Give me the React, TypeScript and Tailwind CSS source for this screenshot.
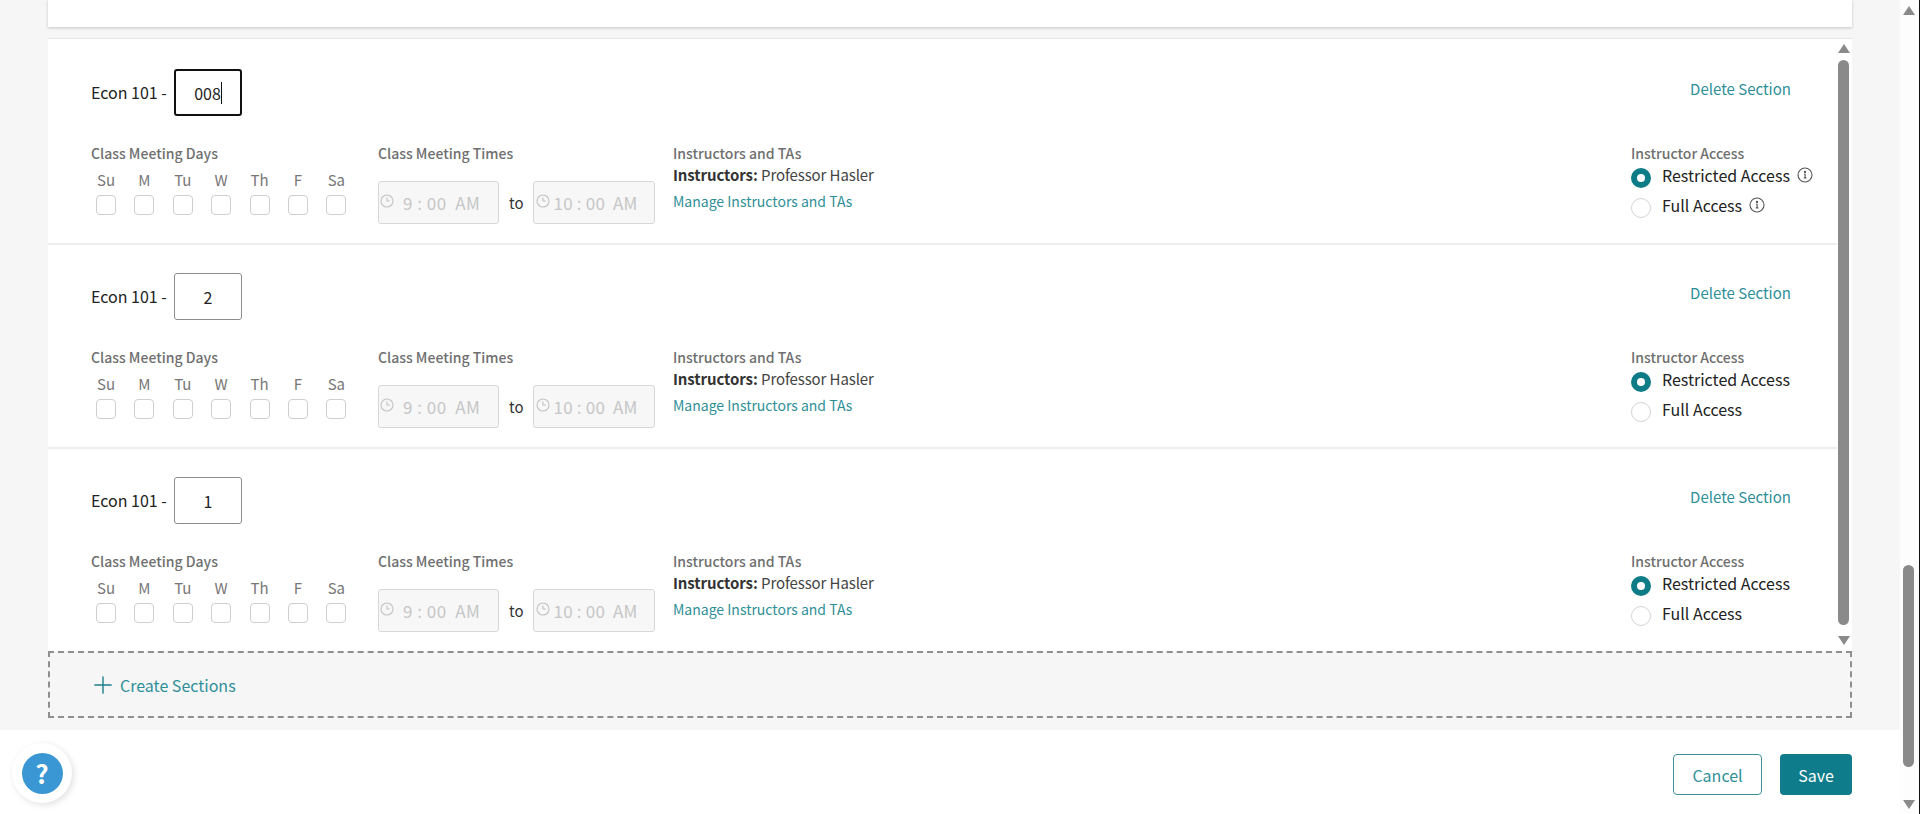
import { Plus } from "lucide-react";

const DAYS = ["Su", "M", "Tu", "W", "Th", "F", "Sa"];

function Clock() {
  return (
    <svg width="14" height="14" viewBox="0 0 14 14" fill="none" stroke="#c4c4c4" strokeWidth="1.1" className="mt-[-4px] shrink-0">
      <circle cx="7" cy="7" r="6" />
      <path d="M7 3.5V7h3" />
    </svg>
  );
}

function Info() {
  return (
    <svg width="16" height="16" viewBox="0 0 16 16" fill="none" stroke="#555" strokeWidth="1.1" className="shrink-0">
      <circle cx="8" cy="8" r="7" />
      <path d="M7 7.2h1.1v3.6M6.8 10.9h2.6" />
      <circle cx="8" cy="5" r="0.6" fill="#555" />
    </svg>
  );
}

function TimeBox({ time, narrow }: { time: string; narrow?: boolean }) {
  return (
    <div
      className={
        narrow
          ? "flex h-[43px] w-[122px] items-center rounded-[3px] border border-[#d8d8d8] bg-[#f7f7f7] pl-[2px] text-[#c6c6c6]"
          : "flex h-[43px] w-[121px] items-center rounded-[3px] border border-[#d8d8d8] bg-[#f7f7f7] pl-[1px] text-[#c6c6c6]"
      }
    >
      <Clock />
      <span className={narrow ? "ml-[4px] text-[17px] tracking-[0.2px] whitespace-pre" : "ml-[9px] text-[17px] tracking-[0.5px] whitespace-pre"}>
        {time}
      </span>
    </div>
  );
}

function Arrow({ down, className }: { down?: boolean; className?: string }) {
  return (
    <svg width="12" height="9" viewBox="0 0 12 9" className={className}>
      <path d={down ? "M0 0h12L6 9z" : "M6 0l6 9H0z"} fill="#8a8a8a" />
    </svg>
  );
}

function Section({ value, focused, info, last }: { value: string; focused?: boolean; info?: boolean; last?: boolean }) {
  return (
    <div className={last ? "h-[200px] pl-[43px] pr-[20px]" : "h-[204px] border-b-2 border-[#eeeeee] pl-[43px] pr-[20px]"}>
      <div className="flex h-[102px] items-start justify-between">
        <div className="flex items-center pt-[28px]">
          <span className="w-[83px] text-[16px] leading-[47px] text-[#222]">Econ 101 -</span>
          <div
            className={
              focused
                ? "flex h-[47px] w-[68px] items-center justify-center rounded-[3px] border-2 border-[#111] text-[16px] text-[#222]"
                : "flex h-[47px] w-[68px] items-center justify-center rounded-[3px] border border-[#8c8c8c] text-[16px] text-[#222]"
            }
          >
            {value}
            {focused && <span className="h-[22px] w-px bg-[#111]" />}
          </div>
        </div>
        <a className="mt-[37px] mr-[26px] text-[15px] leading-[22px] text-[#2f8f99]">Delete Section</a>
      </div>
      <div className="flex items-start">
        <div className="w-[287px]">
          <div className="text-[14px] leading-[20px] font-medium text-[#6f6f6f]">Class Meeting Days</div>
          <div className="mt-[7px] flex">
            {DAYS.map((d) => (
              <div key={d} className="w-[38.4px] pl-[5px]">
                <div className="w-[20px] text-center text-[15px] leading-[20px] text-[#777]">{d}</div>
                <div className="mt-[5px] h-[20px] w-[20px] rounded-[4px] border border-[#cfcfcf] bg-white" />
              </div>
            ))}
          </div>
        </div>
        <div className="w-[295px]">
          <div className="text-[14px] leading-[20px] font-medium text-[#6f6f6f]">Class Meeting Times</div>
          <div className="mt-[18px] flex items-center">
            <TimeBox time="9 : 00  AM" />
            <span className="mr-[9px] ml-[10px] text-[15px] leading-[20px] text-[#333]">to</span>
            <TimeBox time="10 : 00  AM" narrow />
          </div>
        </div>
        <div className="flex-1">
          <div className="text-[14px] leading-[20px] font-medium text-[#6f6f6f]">Instructors and TAs</div>
          <div className="mt-[2px] text-[15px] leading-[20px] tracking-[-0.1px] text-[#444]">
            <span className="font-semibold text-[#333]">Instructors:</span> Professor Hasler
          </div>
          <a className="mt-[6px] block text-[14px] leading-[20px] text-[#2f8f99]">Manage Instructors and TAs</a>
        </div>
        <div className="w-[186px]">
          <div className="text-[14px] leading-[20px] font-medium text-[#6f6f6f]">Instructor Access</div>
          <div className="mt-[2px] flex h-[20px] items-center">
            <span className="mt-[5px] flex h-[20px] w-[20px] items-center justify-center rounded-full bg-[#0e7c86]">
              <span className="h-[8px] w-[8px] rounded-full bg-white" />
            </span>
            <span className="ml-[11px] text-[16px] leading-[20px] text-[#222]">Restricted Access</span>
            {info && <span className="ml-[7px]"><Info /></span>}
          </div>
          <div className="mt-[10px] flex h-[20px] items-center">
            <span className="mt-[5px] h-[20px] w-[20px] rounded-full border border-[#d4d4d4] bg-white" />
            <span className="ml-[11px] text-[16px] leading-[20px] text-[#222]">Full Access</span>
            {info && <span className="ml-[7px]"><Info /></span>}
          </div>
        </div>
      </div>
    </div>
  );
}

export default function App() {
  return (
    <div
      className="relative flex h-[814px] w-full overflow-hidden bg-[#fdfdfd]"
      style={{ fontFamily: '"Noto Sans CJK SC", "Open Sans", sans-serif' }}
    >
      <div className="flex w-[1900px] flex-col">
        <div className="h-[730px] bg-[#f6f6f6] pr-[48px] pl-[48px]">
          <div className="h-[27px] bg-white shadow-[0_1px_3px_rgba(0,0,0,0.2)]" />
          <div className="mt-[11px] flex h-[613px] border-t border-[#e6e6e6] bg-white">
            <div className="flex-1 pt-[2px]">
              <Section value="008" focused info />
              <Section value="2" />
              <Section value="1" last />
            </div>
            <div className="flex w-[15px] flex-col items-start pt-[5px] pl-[1px]">
              <Arrow />
              <div className="mt-[7px] h-[565px] w-[11px] rounded-full bg-[#8a8a8a]" />
              <Arrow down className="mt-[11px]" />
            </div>
          </div>
          <div className="flex h-[67px] items-center border-2 border-dashed border-[#8f8f8f] bg-[#f6f6f6] pl-[39px] text-[16px] text-[#2f8f99]">
            <Plus size={28} strokeWidth={1.2} className="text-[#1f7f8a]" />
            <span className="ml-[3px]">Create Sections</span>
          </div>
        </div>
        <div className="flex flex-1 items-start justify-end bg-white pt-[24px] pr-[48px]">
          <button className="h-[41px] w-[89px] rounded-[4px] border border-[#3f8f9a] text-[16px] text-[#2f8f99]">Cancel</button>
          <button className="ml-[18px] h-[41px] w-[72px] rounded-[4px] bg-[#0e7c8a] text-[16px] text-white">Save</button>
        </div>
      </div>
      <div className="flex w-[20px] flex-col items-start border-r border-[#111] pt-[6px] pl-[3px]">
        <Arrow />
        <div className="mt-[550px] h-[202px] w-[11px] rounded-full bg-[#8a8a8a]" />
        <Arrow down className="mt-[33px]" />
      </div>
      <div className="absolute top-[743px] left-[12px] flex h-[60px] w-[60px] items-center justify-center rounded-full bg-white shadow-[2px_2px_6px_rgba(0,0,0,0.12)]">
        <div className="flex h-[41px] w-[41px] items-center justify-center rounded-full bg-[#3a97d4] text-[26px] leading-none font-bold text-white">?</div>
      </div>
    </div>
  );
}
